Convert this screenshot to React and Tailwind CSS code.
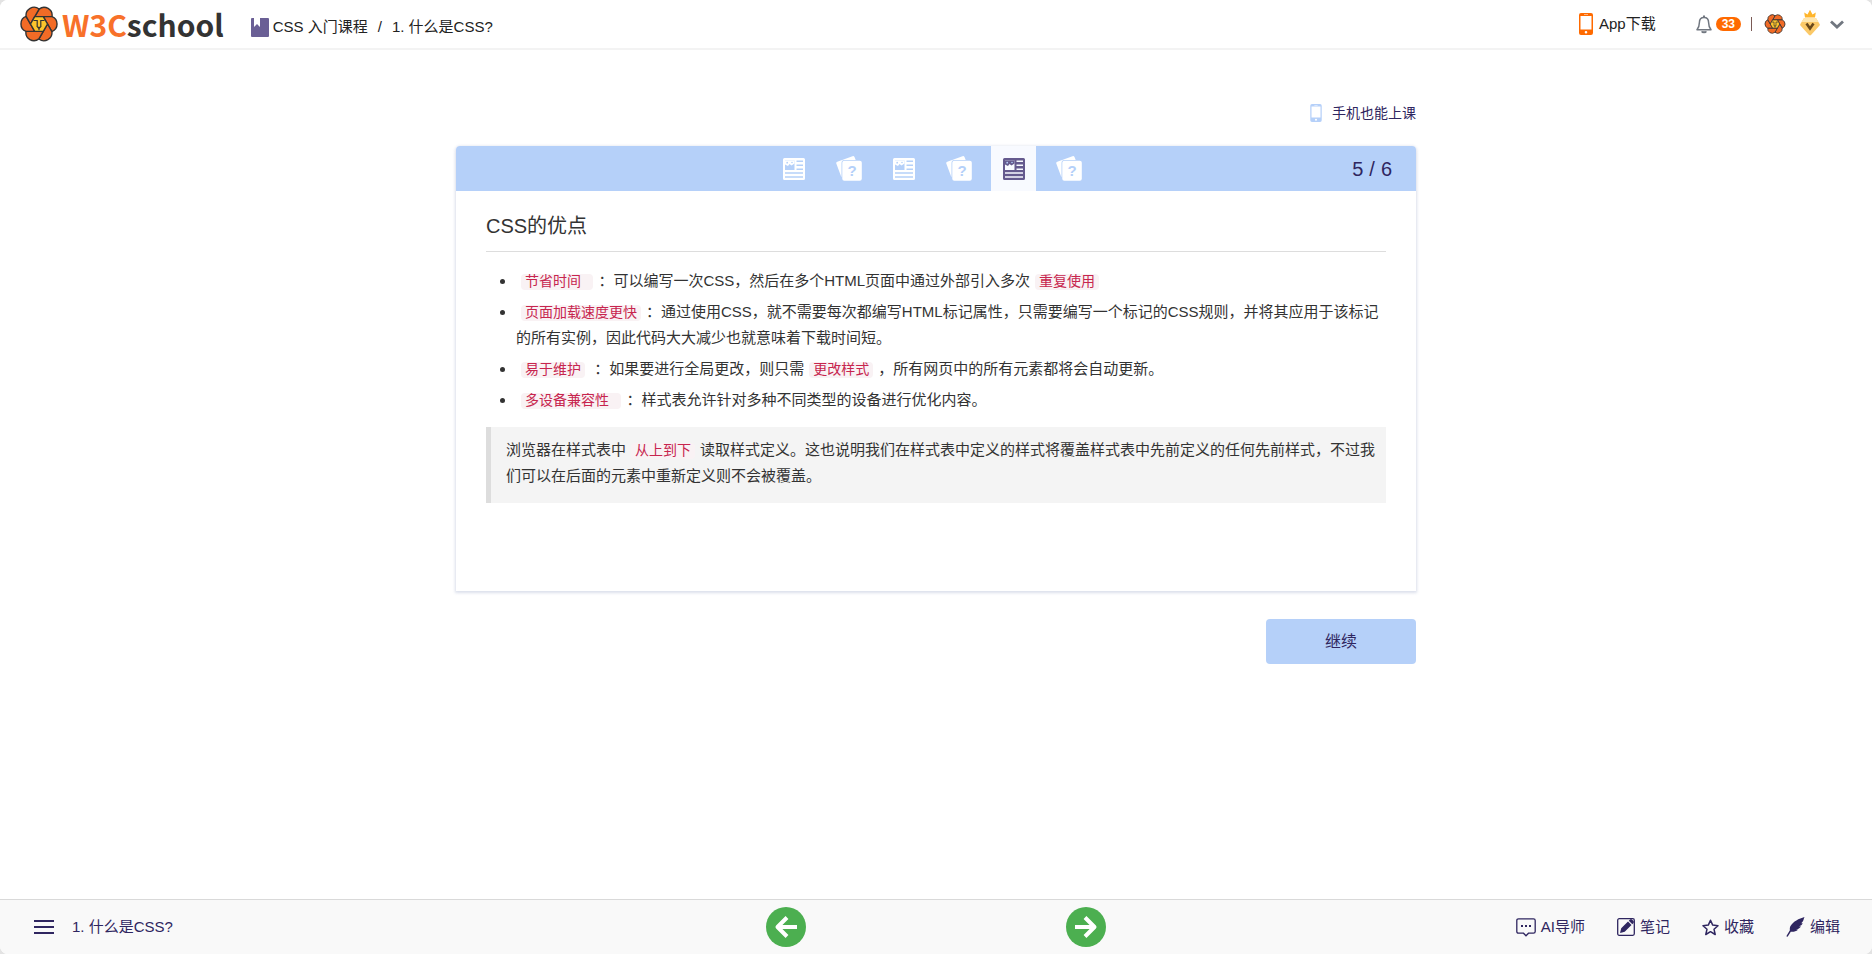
import { useState } from 'react'

const steps = [
  { id: 1, type: 'doc' },
  { id: 2, type: 'quiz' },
  { id: 3, type: 'doc' },
  { id: 4, type: 'quiz' },
  { id: 5, type: 'doc' },
  { id: 6, type: 'quiz' },
]

function LionLogo({ className }) {
  return (
    <svg viewBox="-19 -18 38 36" className={className} aria-hidden="true">
      <g fill="#f26b26" stroke="#333" strokeWidth="1.4" strokeLinejoin="round">
        {[0, 60, 120, 180, 240, 300].map(a => (
          <path key={a} transform={`rotate(${a})`} d="M-4.3-7.4 .1-14.9A8 8 0 0 1 13-7.4Z" />
        ))}
        <path fill="#fcc42c" d="M-8.5 0-4.3-7.4H4.3L8.500 0 4.3 7.4H-4.3Z" />
      </g>
      <path d="M-5.500-3.500h3.700V3M5.500-3.500H1.800V3" fill="none" stroke="#333" strokeWidth="1.200" />
      <path d="M-2.400 2.800h4.800L.6 4.800V6.200H-.6V4.800Z" fill="#333" />
    </svg>
  )
}

function BookIcon() {
  return (
    <svg viewBox="0 0 18 19" className="h-[19px] w-[18px]" fill="#6a5f95" aria-hidden="true">
      <path d="M1 0h2v9l3-3 3 3V0h8a1 1 0 0 1 1 1v17a1 1 0 0 1-1 1H1a1 1 0 0 1-1-1V1a1 1 0 0 1 1-1Z" />
    </svg>
  )
}

function PhoneIcon({ className }) {
  return (
    <svg viewBox="0 0 14 22" className={className} fill="currentColor" aria-hidden="true">
      <path fillRule="evenodd" d="M2 0h10a2 2 0 0 1 2 2v18a2 2 0 0 1-2 2H2a2 2 0 0 1-2-2V2a2 2 0 0 1 2-2ZM1.500 3v13.500h11V3ZM7 18a1.300 1.300 0 1 0 0 2.600A1.300 1.300 0 0 0 7 18ZM5 1.200v.6h4v-.6Z" />
    </svg>
  )
}

function BellIcon() {
  return (
    <svg viewBox="0 0 16 19" className="h-[19px] w-4" fill="none" stroke="#717780" strokeWidth="1.500" aria-hidden="true">
      <path d="M8 2.500c-3 0-4.600 2-4.600 5 0 4-1 5.500-2.400 7.200h14c-1.400-1.700-2.400-3.200-2.400-7.200 0-3-1.600-5-4.600-5Z" strokeLinejoin="round" />
      <path d="M8 .4v2M6 16.200c.3 1.500 3.700 1.500 4 0" strokeWidth="2" />
    </svg>
  )
}

function VipIcon() {
  return (
    <svg viewBox="0 0 20 27" className="h-[27px] w-5" aria-hidden="true">
      <path d="M5 8.500 4.200 3.500 7.500 5.500 10 .8 12.500 5.500l3.300-2L15 8.500Z" fill="#ffb52b" />
      <path d="M5 9h10q.8 0 1.300.6l3.300 5.400a1.500 1.500 0 0 1-.2 1.700L11 26a1.500 1.500 0 0 1-2 0L.6 16.700a1.500 1.500 0 0 1-.2-1.700l3.300-5.400Q4.200 9 5 9Z" fill="#fbc968" />
      <path d="M5 9h10l1.300.6 2 3.400H1.700l2-3.400Z" fill="#ffe6ae" />
      <path d="m6.500 14.500 3.500 5 3.500-5" fill="none" stroke="#69481a" strokeWidth="2.600" />
    </svg>
  )
}

function DocIcon() {
  return (
    <svg viewBox="0 0 22 22" className="h-[22px] w-[22px]" fill="currentColor" aria-hidden="true">
      <path fillRule="evenodd" d="M1.500 0h19A1.500 1.500 0 0 1 22 1.500v19a1.500 1.500 0 0 1-1.500 1.500h-19A1.500 1.500 0 0 1 0 20.500v-19A1.500 1.500 0 0 1 1.500 0ZM2 2.500V12h9.500V2.500ZM13.500 2.500v1.600H20V2.500ZM13.500 6.500v1.600H20V6.500ZM13.500 10.500v1.500H20v-1.500ZM2 14.200v1.600h18v-1.600ZM2 18.200v1.600h18v-1.600Z" />
      <path d="M2 2.500h9.500v3L8.500 7.500 6.500 6 5 8 2 6.500Z" />
      <circle cx="4.200" cy="4.700" r=".9" fill="#b5d0f9" />
      <circle cx="9" cy="4.500" r=".8" fill="#b5d0f9" />
    </svg>
  )
}

function QuizIcon() {
  return (
    <svg viewBox="0 0 26 25" className="h-[25px] w-[26px]" aria-hidden="true">
      <path d="M1.300 5.800 16.500.2q1.400-.4 2 .9l1.200 2.900H8.500a3 3 0 0 0-3 3v14.500L.3 7.600q-.4-1.300 1-1.800Z" fill="currentColor" />
      <rect x="6.300" y="4.800" width="19.500" height="20" rx="2" fill="currentColor" />
      <text x="16.200" y="20" textAnchor="middle" fontSize="15" fontWeight="bold" fontFamily="Liberation Sans" fill="#b5d0f9">?</text>
    </svg>
  )
}

function ArrowIcon({ flip }) {
  return (
    <svg viewBox="0 0 24 22" className={flip ? 'h-[22px] w-6 rotate-180' : 'h-[22px] w-6'} fill="none" stroke="#fff" strokeWidth="4" aria-hidden="true">
      <path d="M23 11H4M13 1.500 3.500 11l9.500 9.500" strokeLinejoin="round" />
    </svg>
  )
}

function ChatIcon() {
  return (
    <svg viewBox="0 0 20 19" className="h-[19px] w-5" fill="none" stroke="currentColor" strokeWidth="1.300" aria-hidden="true">
      <path d="M2.500.8h15q1.700 0 1.700 1.700v11q0 1.700-1.700 1.700H12.500L10 17.800 7.500 15.200h-5Q.8 15.200.8 13.500v-11Q.8.8 2.500.8Z" />
      <path d="M5 8h2M9 8h2M13 8h2" strokeWidth="2" />
    </svg>
  )
}

function NoteIcon() {
  return (
    <svg viewBox="0 0 18 18" className="h-[18px] w-[18px]" aria-hidden="true">
      <rect x=".7" y=".7" width="16.600" height="16.600" rx="1.500" fill="none" stroke="currentColor" strokeWidth="1.300" />
      <path d="m3 15 1.200-4.700L11 3.500l3.500 3.500-6.800 6.800ZM11.800 2.700 13 1.500q1-.8 2 0l1.500 1.500q.8 1 0 2l-1.200 1.200Z" fill="currentColor" />
    </svg>
  )
}

function StarIcon() {
  return (
    <svg viewBox="0 0 17 17" className="h-[17px] w-[17px]" fill="none" stroke="currentColor" strokeWidth="1.500" strokeLinejoin="round" aria-hidden="true">
      <path d="m8.500 1.200 2.200 4.900 5.300.6-4 3.500 1.200 5.300-4.700-2.800-4.700 2.800L5 10.200l-4-3.500 5.300-.6Z" />
    </svg>
  )
}

function FeatherIcon() {
  return (
    <svg viewBox="0 0 19 20" className="h-5 w-[19px]" fill="currentColor" aria-hidden="true">
      <path d="M18.500 0C13 1.500 7 4.500 4.500 9c-.8 1.500-.8 2.800-.6 4.200L.3 19.200l1.300.5 3.200-5c2.500.4 5-.2 7.200-2l-2-.2c2 0 4-1.500 5-3l-2-.2c1.700-.3 3.200-1.600 3.700-3l-1.500-.1C17.700 4.500 17.500 2 18.500 0Z" />
    </svg>
  )
}

const tools = [
  { label: 'AI导师', icon: ChatIcon },
  { label: '笔记', icon: NoteIcon },
  { label: '收藏', icon: StarIcon },
  { label: '编辑', icon: FeatherIcon },
]

function Code({ children }) {
  return (
    <code className="mx-[5px] rounded-sm bg-[#f9f2f4] px-1 font-['Liberation_Mono','Noto_Sans_CJK_SC',monospace] text-sm leading-4 text-[#c7254e]">
      {children}
    </code>
  )
}

function Header() {
  return (
    <header className="flex h-[50px] items-center justify-between border-b-2 border-[#f3f3f3] bg-white pr-7 pl-5">
      <div className="flex items-center">
        <a href="#home" className="flex items-center gap-1">
          <LionLogo className="h-9 w-[38px]" />
          <span className="font-['Noto_Sans_CJK_SC',sans-serif] text-[30px] leading-9 font-bold text-[#333]">
            <span className="text-[#f8712a]">W3C</span>school
          </span>
        </a>
        <nav className="ml-[27px] flex items-center pt-1.5 text-[15px] text-[#222]">
          <BookIcon />
          <a href="#course" className="ml-1">CSS 入门课程</a>
          <span className="mx-2.5">/</span>
          <a href="#chapter">1. 什么是CSS?</a>
        </nav>
      </div>
      <div className="flex items-center text-[15px] text-[#222]">
        <a href="#app" className="flex items-center gap-1.5">
          <PhoneIcon className="h-[22px] w-3.5 text-[#ff6a00]" />
          App下载
        </a>
        <a href="#messages" className="ml-10 flex items-center gap-1">
          <BellIcon />
          <span className="flex h-3.5 items-center rounded-full bg-[#ff6a00] px-1.5 text-xs font-bold text-white">33</span>
        </a>
        <span className="mr-3 ml-2.5 h-3.5 w-px bg-[#7a5a55]" />
        <LionLogo className="h-5 w-[22px]" />
        <div className="mr-2.5 ml-3.5 pb-1"><VipIcon /></div>
        <button aria-label="账户菜单">
          <svg viewBox="0 0 14 9" className="h-[9px] w-3.5" fill="none" stroke="#717780" strokeWidth="2.800">
            <path d="m1 1.500 6 5.500 6-5.500" />
          </svg>
        </button>
      </div>
    </header>
  )
}

function Lesson() {
  return (
    <article className="px-[30px] pt-5 pb-[88px] text-[15px] leading-[26px] text-[#333]">
      <h1 className="border-b border-[#ddd] pb-2.5 text-xl leading-[30px]">CSS的优点</h1>
      <ul className="mt-4 list-disc space-y-[5px] pl-[30px]">
        <li><Code>节省时间&nbsp;</Code>：可以编写一次CSS，然后在多个HTML页面中通过外部引入多次<Code>重复使用</Code></li>
        <li><Code>页面加载速度更快</Code>：通过使用CSS，就不需要每次都编写HTML标记属性，只需要编写一个标记的CSS规则，并将其应用于该标记的所有实例，因此代码大大减少也就意味着下载时间短。</li>
        <li><Code>易于维护</Code> ：如果要进行全局更改，则只需<Code>更改样式</Code>，所有网页中的所有元素都将会自动更新。</li>
        <li><Code>多设备兼容性&nbsp;</Code>：样式表允许针对多种不同类型的设备进行优化内容。</li>
      </ul>
      <blockquote className="mt-[14px] border-l-[5px] border-[#ddd] bg-[#f4f4f4] pt-2.5 pr-2 pb-3.5 pl-[15px]">
        浏览器在样式表中<Code>从上到下</Code>读取样式定义。这也说明我们在样式表中定义的样式将覆盖样式表中先前定义的任何先前样式，不过我们可以在后面的元素中重新定义则不会被覆盖。
      </blockquote>
    </article>
  )
}

export default function App() {
  const [current, setCurrent] = useState(5)
  const go = n => setCurrent(Math.min(steps.length, Math.max(1, n)))

  return (
    <div lang="zh-CN" className="bg-[#e3e3e3] font-['Liberation_Sans','Noto_Sans_CJK_SC',sans-serif]">
      <div className="flex min-h-screen flex-col overflow-hidden rounded-lg bg-white">
        <Header />

        <main className="mx-auto flex w-full max-w-[960px] flex-1 flex-col">
          <a href="#mobile" className="mt-[53px] flex items-center gap-2.5 self-end text-sm text-[#2f2660]">
            <PhoneIcon className="h-[18px] w-3 text-[#b5d0f9]" />
            手机也能上课
          </a>

          <section className="mt-[23px] rounded-t-sm shadow-[0_1px_3px_1px_rgba(80,100,160,0.2)]">
            <div className="grid h-[45px] grid-cols-[1fr_auto_1fr] items-center rounded-t-sm bg-[#b5d0f9]">
              <div className="col-start-2 flex gap-2.5 pr-2.5">
                {steps.map(s => (
                  <button
                    key={s.id}
                    aria-label={`第${s.id}节`}
                    onClick={() => setCurrent(s.id)}
                    className={`flex h-[45px] w-[45px] items-center justify-center ${s.id === current ? 'bg-[#f8faff] text-[#655a8e]' : 'text-white'}`}
                  >
                    {s.type === 'doc' ? <DocIcon /> : <QuizIcon />}
                  </button>
                ))}
              </div>
              <div className="flex justify-end gap-1.5 pr-6 text-xl text-[#2f2660]">
                <span>{current}</span>
                <span>/</span>
                <span>{steps.length}</span>
              </div>
            </div>
            <Lesson />
          </section>

          <button
            onClick={() => go(current + 1)}
            className="mt-7 mb-8 h-[45px] w-[150px] self-end rounded bg-[#b5d0f9] text-base text-[#2f2660]"
          >
            继续
          </button>
        </main>

        <footer className="grid h-[55px] grid-cols-[1fr_auto_1fr] items-center border-t border-[#d9d9d9] bg-[#f9f9f9] px-8 text-[15px] text-[#2f2660]">
          <button className="flex items-center gap-4 justify-self-start">
            <svg viewBox="0 0 24 16" className="h-4 w-6" stroke="currentColor" strokeWidth="2">
              <path d="M2 2h20M2 8h20M2 14h20" />
            </svg>
            1. 什么是CSS?
          </button>
          <div className="flex gap-[260px]">
            <button aria-label="上一节" onClick={() => go(current - 1)} className="flex h-10 w-10 items-center justify-center rounded-full bg-[#4caf50]">
              <ArrowIcon />
            </button>
            <button aria-label="下一节" onClick={() => go(current + 1)} className="flex h-10 w-10 items-center justify-center rounded-full bg-[#4caf50]">
              <ArrowIcon flip />
            </button>
          </div>
          <div className="flex gap-8 justify-self-end">
            {tools.map(({ label, icon: Icon }) => (
              <button key={label} className="flex items-center gap-[5px]">
                <Icon />
                {label}
              </button>
            ))}
          </div>
        </footer>
      </div>
    </div>
  )
}
